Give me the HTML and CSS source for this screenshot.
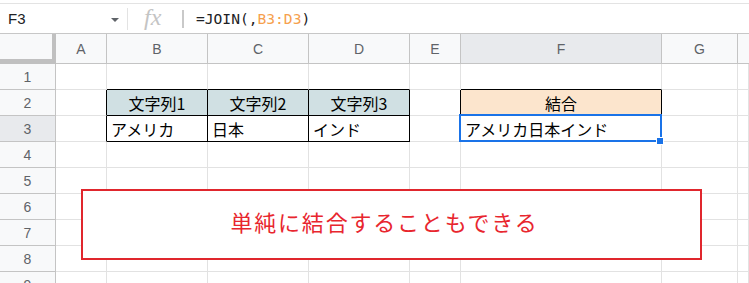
FILE: index.html
```html
<!DOCTYPE html>
<html lang="ja">
<head>
<meta charset="utf-8">
<link rel="stylesheet" href="styles.css">
</head>
<body>
<div class="fbar">
  <div class="namebox"><span class="name">F3</span><span class="caret"></span></div>
  <div class="sep1"></div>
  <div class="fx">fx</div>
  <div class="sep2"></div>
  <div class="formula">=JOIN(,<span class="ref">B3:D3</span>)</div>
</div>
<div class="sheet">
  <div class="grid">
    <div class="corner"></div>
    <div class="ch">A</div><div class="ch">B</div><div class="ch">C</div><div class="ch">D</div><div class="ch">E</div><div class="ch sel">F</div><div class="ch">G</div><div class="ch last"></div>

    <div class="rh">1</div>
    <div class="c"></div><div class="c bb"></div><div class="c bb"></div><div class="c bb"></div><div class="c"></div><div class="c bb"></div><div class="c"></div><div class="c"></div>

    <div class="rh">2</div>
    <div class="c br"></div><div class="c tb hd ctr">文字列1</div><div class="c tb hd ctr">文字列2</div><div class="c tb hd ctr">文字列3</div><div class="c br"></div><div class="c br or ctr">結合</div><div class="c"></div><div class="c"></div>

    <div class="rh sel">3</div>
    <div class="c br"></div><div class="c tb">アメリカ</div><div class="c tb">日本</div><div class="c tb">インド</div><div class="c"></div><div class="c active">アメリカ日本インド<span class="selbox"><span class="handle"></span></span></div><div class="c"></div><div class="c"></div>

    <div class="rh">4</div>
    <div class="c"></div><div class="c"></div><div class="c"></div><div class="c"></div><div class="c"></div><div class="c"></div><div class="c"></div><div class="c"></div>

    <div class="rh">5</div>
    <div class="c"></div><div class="c"></div><div class="c"></div><div class="c"></div><div class="c"></div><div class="c"></div><div class="c"></div><div class="c"></div>

    <div class="rh">6</div>
    <div class="c"></div><div class="c"></div><div class="c"></div><div class="c"></div><div class="c"></div><div class="c"></div><div class="c"></div><div class="c"></div>

    <div class="rh">7</div>
    <div class="c"></div><div class="c"></div><div class="c"></div><div class="c"></div><div class="c"></div><div class="c"></div><div class="c"></div><div class="c"></div>

    <div class="rh">8</div>
    <div class="c"></div><div class="c"></div><div class="c"></div><div class="c"></div><div class="c"></div><div class="c"></div><div class="c"></div><div class="c"></div>

    <div class="rh">9</div>
    <div class="c"></div><div class="c"></div><div class="c"></div><div class="c"></div><div class="c"></div><div class="c"></div><div class="c"></div><div class="c"></div>
  </div>
  <div class="note">単純に結合することもできる</div>
</div>
</body>
</html>
```
FILE: styles.css
```css
html, body {
  margin: 0;
  padding: 0;
  background: #fff;
  overflow: hidden;
}
body {
  padding-top: 3px;
  font-family: "Liberation Sans", Arial, sans-serif;
}
.fbar {
  display: flex;
  align-items: center;
  height: 29px;
  border-top: 1px solid #e3e3e3;
  border-bottom: 1px solid #c7c7c7;
}
.namebox {
  width: 127px;
  box-sizing: border-box;
  padding: 0 8px 0 8px;
  display: flex;
  align-items: center;
  justify-content: space-between;
}
.name {
  font-size: 15px;
  color: #202124;
}
.caret {
  width: 0;
  height: 0;
  border-left: 4px solid transparent;
  border-right: 4px solid transparent;
  border-top: 4px solid #5f6368;
  margin-top: 2px;
}
.sep1 {
  width: 1px;
  height: 22px;
  background: #e3e3e3;
}
.fx {
  margin-left: 16px;
  width: 24px;
  font-family: "Liberation Serif", serif;
  font-style: italic;
  font-size: 24px;
  color: #c4c4c4;
  line-height: 24px;
  margin-top: -3px;
}
.sep2 {
  margin-left: 14px;
  width: 2px;
  height: 18px;
  background: #c9c9c9;
}
.formula {
  margin-left: 12px;
  font-family: "DejaVu Sans Mono", "Liberation Mono", monospace;
  font-size: 14.6px;
  color: #202124;
}
.ref {
  color: #f6a04d;
}
.sheet {
  position: relative;
}
.grid {
  display: grid;
  grid-template-columns: 56px 51px 101px 101px 101px 51px 201px 76px 11px;
  grid-template-rows: 30px repeat(9, 26px);
}
.grid > div {
  box-sizing: border-box;
  border-right: 1px solid #e2e2e2;
  border-bottom: 1px solid #e2e2e2;
}
.grid > .corner {
  background: #f8f9fa;
  border-right: 4px solid #c0c0c0;
  border-bottom: 5px solid #c0c0c0;
}
.grid > .ch {
  background: #f8f9fa;
  border-right: 1px solid #c4c4c4;
  border-bottom: 1px solid #c4c4c4;
  display: flex;
  align-items: center;
  justify-content: center;
  font-size: 14px;
  color: #5f6368;
}
.grid > .ch.last {
  border-right: none;
}
.grid > .ch.sel, .grid > .rh.sel {
  background: #e8eaed;
}
.grid > .rh {
  background: #f8f9fa;
  border-right: 1px solid #c4c4c4;
  border-bottom: 1px solid #c4c4c4;
  display: flex;
  align-items: center;
  justify-content: center;
  font-size: 14px;
  color: #5f6368;
}
.c {
  font-family: "Noto Sans CJK JP", sans-serif;
  font-size: 16px;
  color: #000;
  display: flex;
  align-items: center;
  padding-left: 4px;
  white-space: nowrap;
}
.c.ctr {
  justify-content: center;
  padding-left: 0;
}
.grid > .bb {
  border-bottom-color: #000;
}
.grid > .br {
  border-right-color: #000;
}
.grid > .tb {
  border-right-color: #000;
  border-bottom-color: #000;
}
.hd {
  background: #d0e0e3;
}
.or {
  background: #fce5cd;
}
.active {
  position: relative;
}
.selbox {
  position: absolute;
  left: -2px;
  top: -2px;
  right: -1px;
  bottom: -1px;
  border: 2px solid #1a73e8;
}
.handle {
  position: absolute;
  right: -4px;
  bottom: -5px;
  width: 6px;
  height: 6px;
  background: #1a73e8;
  border: 1px solid #fff;
}
.note {
  position: absolute;
  left: 81px;
  top: 155px;
  width: 621px;
  height: 71px;
  box-sizing: border-box;
  border: 2px solid #e0262d;
  background: #fff;
  display: flex;
  align-items: center;
  justify-content: center;
  padding: 0 14px 8px 0;
  font-family: "Noto Sans CJK JP", sans-serif;
  font-size: 22px;
  letter-spacing: 1.8px;
  color: #e8262e;
}
```
